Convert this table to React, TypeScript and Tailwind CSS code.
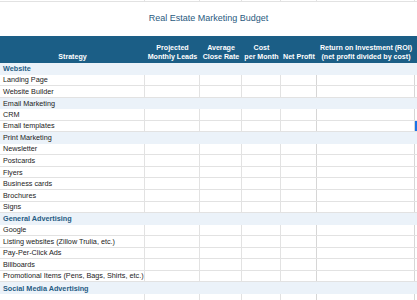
const cols = ['w-[145px]', 'w-[55px]', 'w-[42px]', 'w-[39px]', 'w-[36px]', 'w-[98px]'];

type Row = { label: string; kind?: 'section' | 'group' };

const rows: Row[] = [
  { label: 'Website', kind: 'section' },
  { label: 'Landing Page' },
  { label: 'Website Builder' },
  { label: 'Email Marketing', kind: 'group' },
  { label: 'CRM' },
  { label: 'Email templates' },
  { label: 'Print Marketing', kind: 'group' },
  { label: 'Newsletter' },
  { label: 'Postcards' },
  { label: 'Flyers' },
  { label: 'Business cards' },
  { label: 'Brochures' },
  { label: 'Signs' },
  { label: 'General Advertising', kind: 'section' },
  { label: 'Google' },
  { label: 'Listing websites (Zillow Trulia, etc.)' },
  { label: 'Pay-Per-Click Ads' },
  { label: 'Billboards' },
  { label: 'Promotional Items (Pens, Bags, Shirts, etc.)' },
  { label: 'Social Media Advertising', kind: 'section' },
  { label: '' },
];

export default function App() {
  return (
    <div className="w-[417px] h-[300px] overflow-hidden bg-white font-['Liberation_Sans',Arial,sans-serif]">
      {/* sliver of the row above */}
      <div className="flex h-[2px] border-b border-[#e2e2e2]">
        {cols.map((c, i) => (
          <div key={i} className={`${c} border-r border-[#e2e2e2]`} />
        ))}
        <div className="flex-1" />
      </div>

      <div className="flex h-[34px] items-center justify-center text-[9px] text-[#2a5a80]">
        Real Estate Marketing Budget
      </div>

      <div className="flex h-[27px] items-end bg-[#1b5e86] pb-[1px] text-[7.1px] font-bold leading-[9px] text-white">
        <div className={`${cols[0]} text-center`}>Strategy</div>
        <div className={`${cols[1]} text-center`}>Projected<br />Monthly Leads</div>
        <div className={`${cols[2]} text-center`}>Average<br />Close Rate</div>
        <div className={`${cols[3]} text-center`}>Cost<br />per Month</div>
        <div className={`${cols[4]} text-center`}>Net Profit</div>
        <div className={`${cols[5]} text-center`}>Return on Investment (ROI)<br />(net profit divided by cost)</div>
      </div>

      {rows.map((r, i) => {
        if (r.kind) {
          return (
            <div key={i} className="flex h-[11.55px] items-center bg-[#ebf2f9] pl-[3px] text-[7.25px] leading-none">
              <span className={r.kind === 'section' ? 'font-bold text-[#265c84]' : 'text-[#222]'}>{r.label}</span>
            </div>
          );
        }
        return (
          <div key={i} className="flex h-[11.55px] border-b border-[#e2e2e2] text-[7.25px] leading-none text-[#222]">
            <div className={`${cols[0]} flex items-center whitespace-nowrap border-r border-[#e2e2e2] pl-[3px]`}>{r.label}</div>
            <div className={`${cols[1]} border-r border-[#e2e2e2]`} />
            <div className={`${cols[2]} border-r border-[#e2e2e2]`} />
            <div className={`${cols[3]} border-r border-[#e2e2e2]`} />
            <div className={`${cols[4]} border-r border-[#d6d6d6]`} />
            <div className={`${cols[5]} border-r border-[#d6d6d6]`} />
            <div className={`flex-1 ${r.label === 'Email templates' ? 'bg-[#1a73e8]' : ''}`} />
          </div>
        );
      })}
    </div>
  );
}
